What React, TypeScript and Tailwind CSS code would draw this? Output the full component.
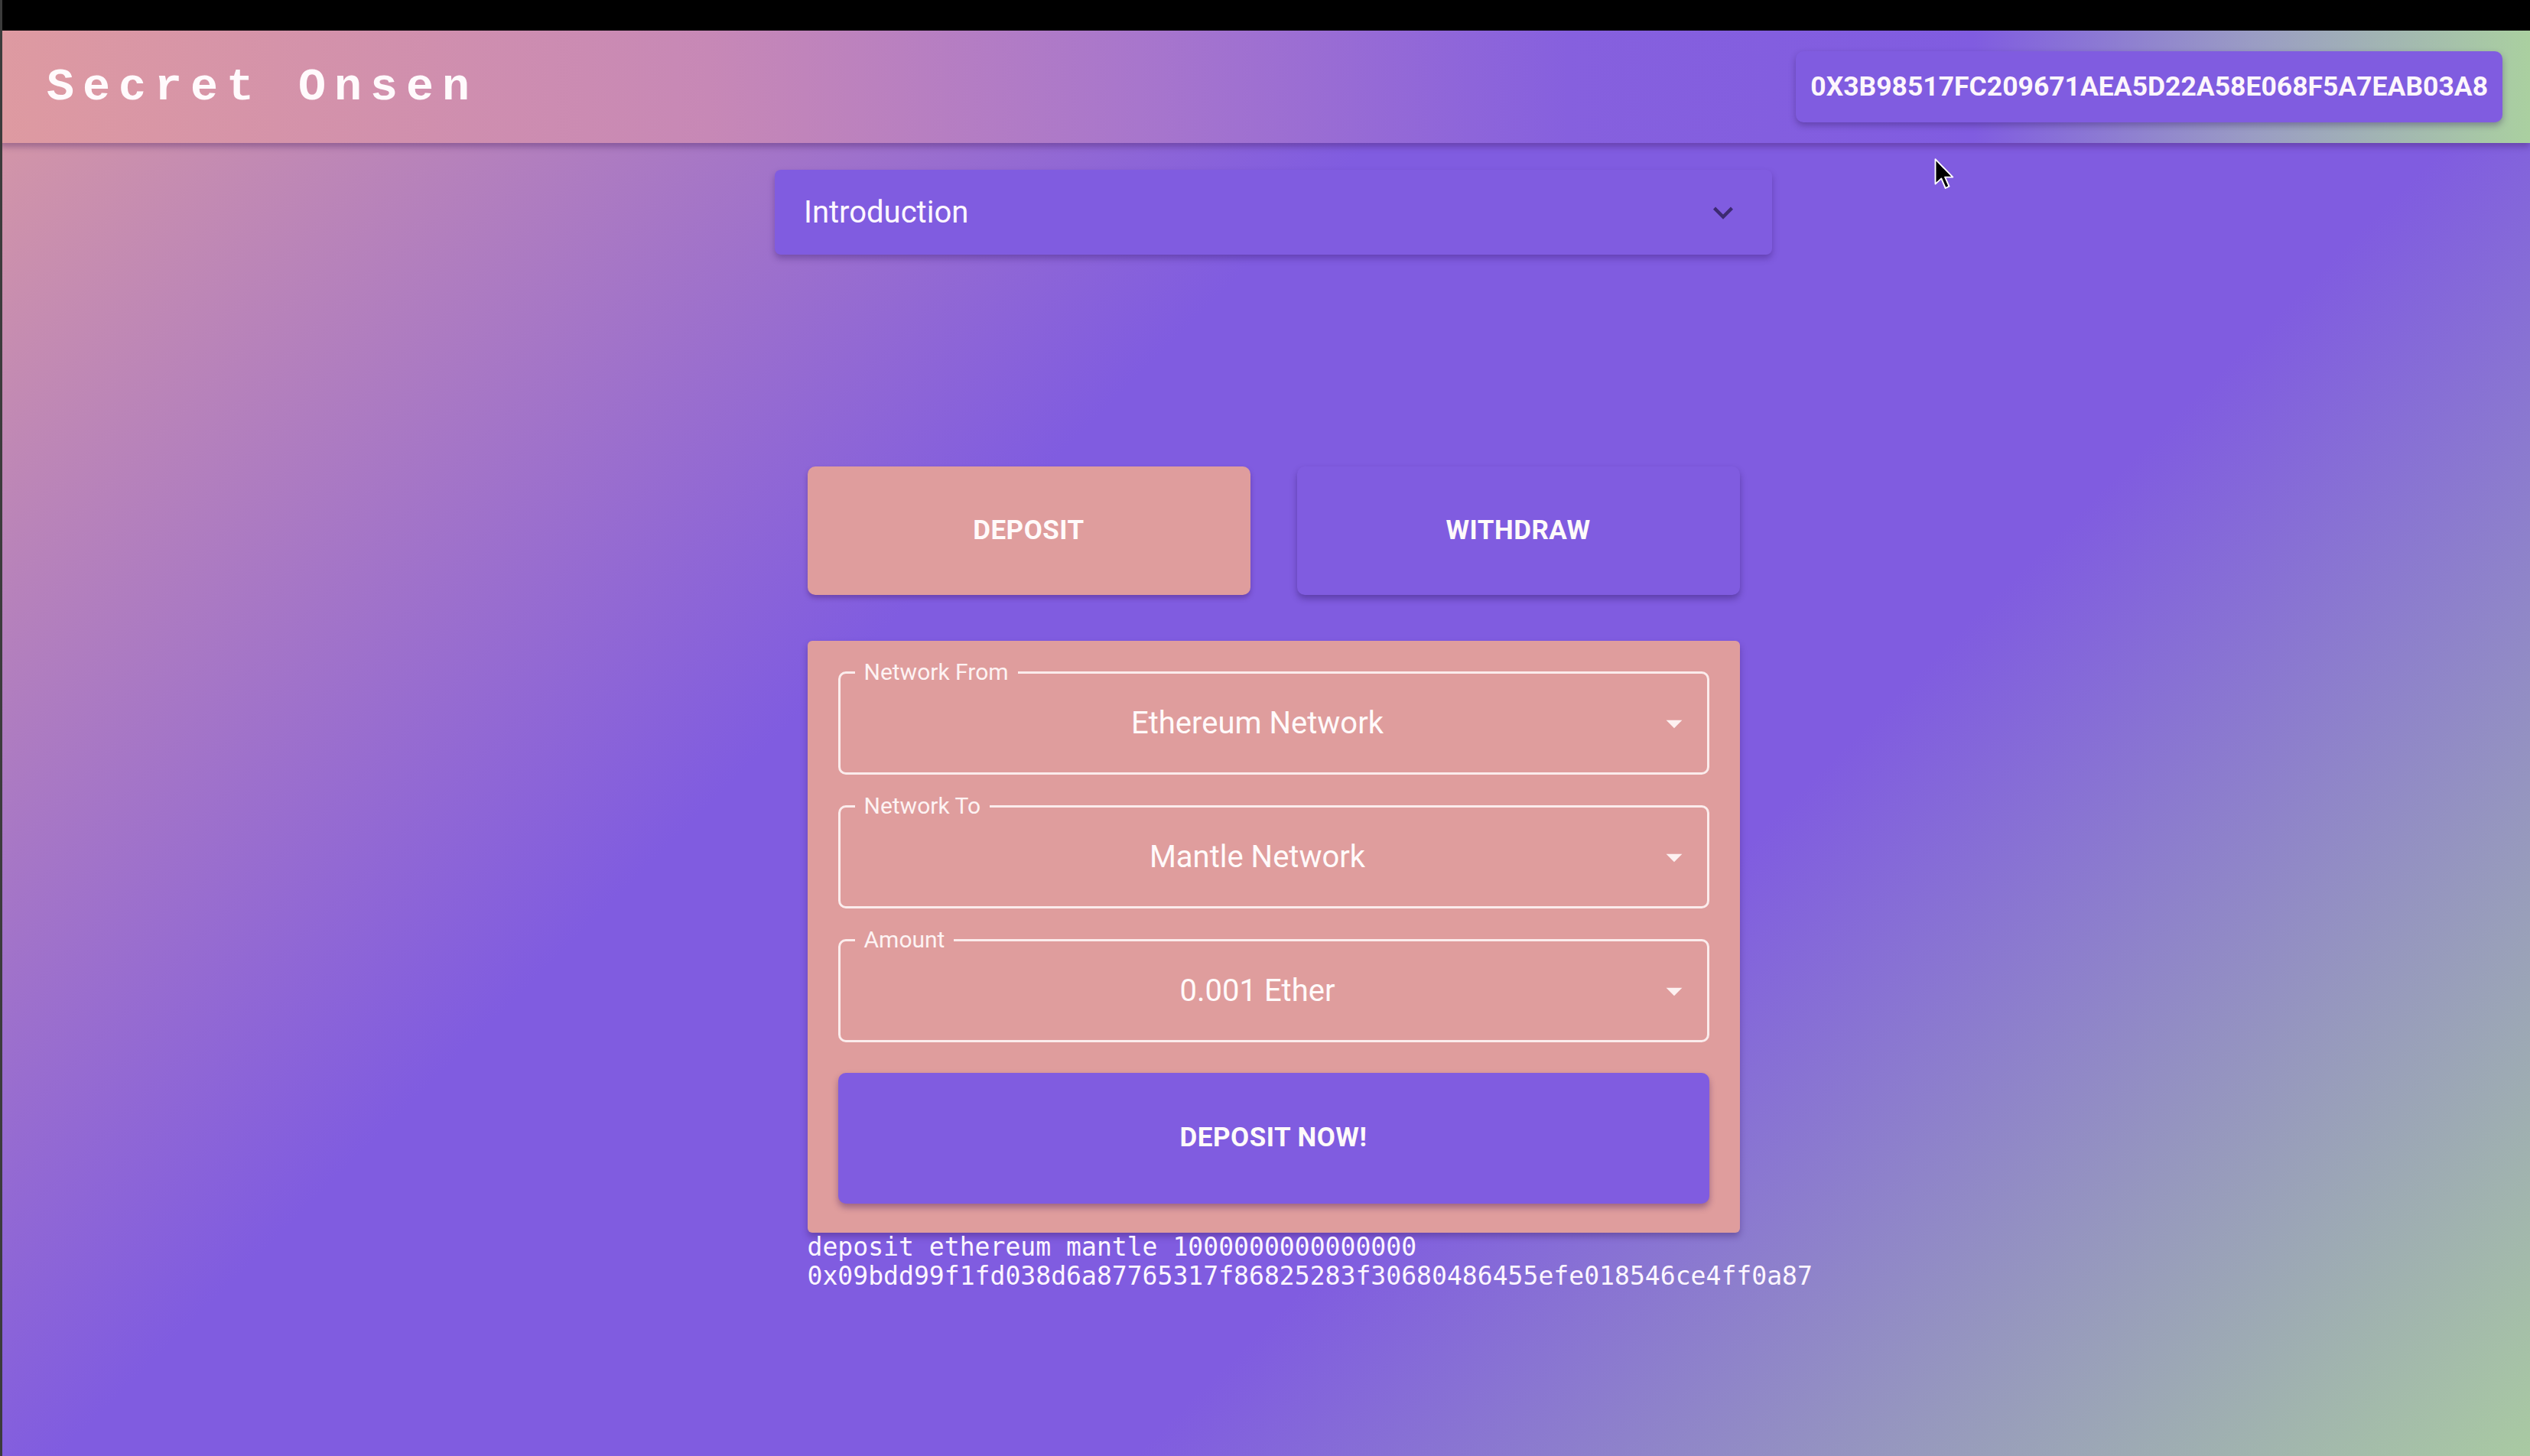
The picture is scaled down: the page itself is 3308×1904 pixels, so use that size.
import React from 'react';

// Bridge screen: app bar, intro accordion, deposit/withdraw tabs and form card

const ArrowDrop = () => (
    <svg viewBox="0 0 24 24" className="h-[50px] w-[50px] fill-[#fdf1f1]">
        <path d="M7 10l5 5 5-5z" />
    </svg>
);

const SelectField = ({ label, value }: { label: string; value: string }) => (
    <div className="relative flex h-[135px] items-center justify-center rounded-[10px] border-[3px] border-[#fbecec] pr-[42px]">
        <span className="absolute -top-[19px] left-[19px] bg-[#df9d9d] px-[12px] text-[30px] leading-[34px] text-[#fdf3f3]">
            {label}
        </span>
        <span className="text-[40px] leading-none text-[#fffafa]">{value}</span>
        <span className="absolute right-[18px] top-1/2 -translate-y-1/2">
            <ArrowDrop />
        </span>
    </div>
);

export default function App() {
    return (
        <div className="relative min-h-screen w-full overflow-hidden bg-[linear-gradient(135deg,#db9ba2_0%,#805ce0_38%,#805ce0_65%,#a9caa2_100%)] font-['Roboto','Liberation_Sans',sans-serif] text-white">
            {/* video frame edge */}
            <div className="absolute left-0 top-0 z-20 h-full w-[3px] bg-[#3b3b3b]" />
            <div className="h-[40px] w-full bg-black" />

            <header className="relative z-10 flex h-[147px] items-center justify-between bg-[linear-gradient(to_right,#de9aa1_0%,#c788b6_28%,#a876cc_45%,#8660de_62%,#805ce0_78%,#9a9cc4_89%,#aad0a0_100%)] pl-[61px] pr-[36px] shadow-[0_5px_8px_rgba(60,20,90,0.35)]">
                <h1 className="font-['Liberation_Mono','Courier_New',monospace] text-[60px] font-bold leading-none tracking-[11px] text-[#fffafc]">
                    Secret Onsen
                </h1>
                <button className="h-[93px] rounded-[10px] bg-[#805ce0] px-[19px] text-[35.5px] font-bold uppercase tracking-normal text-[#fdf6fc] shadow-[0_4px_8px_rgba(40,20,80,0.35)]">
                    0X3B98517FC209671AEA5D22A58E068F5A7EAB03A8
                </button>
            </header>

            <main className="flex justify-center pl-[22px]">
                <div className="flex w-[1304px] flex-col items-center">
                    <div className="mt-[35px] flex h-[111px] w-full items-center justify-between rounded-[8px] bg-[#805ce0] pl-[38px] pr-[38px] shadow-[0_5px_8px_rgba(50,20,100,0.35)]">
                        <span className="text-[40px] leading-none text-[#fdf7ff]">Introduction</span>
                        <svg viewBox="0 0 24 24" className="h-[52px] w-[52px] fill-[#3d2a72]">
                            <path d="M16.59 8.59 12 13.17 7.41 8.59 6 10l6 6 6-6z" />
                        </svg>
                    </div>

                    <div className="mt-[277px] w-[1219px]">
                        <div className="grid grid-cols-2 gap-[61px]">
                            <button className="h-[168px] rounded-[10px] bg-[#df9d9d] text-[35px] font-bold tracking-[0.5px] text-[#fffafa] shadow-[0_4px_6px_rgba(60,20,90,0.35)]">
                                DEPOSIT
                            </button>
                            <button className="h-[168px] rounded-[10px] bg-[#805ce0] text-[35px] font-bold tracking-[0.5px] text-[#fffafa] shadow-[0_5px_8px_rgba(40,20,90,0.4)]">
                                WITHDRAW
                            </button>
                        </div>

                        <div className="mt-[60px] flex flex-col gap-[40px] rounded-[6px] bg-[#df9d9d] px-[40px] pb-[38px] pt-[40px] shadow-[0_5px_8px_rgba(50,20,90,0.35)]">
                            <SelectField label="Network From" value="Ethereum Network" />
                            <SelectField label="Network To" value="Mantle Network" />
                            <SelectField label="Amount" value="0.001 Ether" />
                            <button className="h-[171px] rounded-[10px] bg-[#805ce0] text-[35px] font-bold tracking-[0.5px] text-[#fffafa] shadow-[0_5px_8px_rgba(60,20,90,0.4)]">
                                DEPOSIT NOW!
                            </button>
                        </div>

                        <div className="font-['DejaVu_Sans_Mono',monospace] text-[33.1px] leading-[38px] text-[#fdf6ff]">
                            <div>deposit ethereum mantle 1000000000000000</div>
                            <div className="whitespace-nowrap">0x09bdd99f1fd038d6a87765317f86825283f30680486455efe018546ce4ff0a87</div>
                        </div>
                    </div>
                </div>
            </main>

            {/* mouse pointer from the recording */}
            <svg viewBox="0 0 22 35" className="absolute left-[2529px] top-[207px] z-30 h-[42px] w-[27px]">
                <path d="M1 1 L1 28 L7.5 22 L12 32.5 L16 30.5 L11.5 20.5 L20 20.5 Z" fill="#000" stroke="#fff" strokeWidth="1.6" strokeLinejoin="round" />
            </svg>
        </div>
    );
}
